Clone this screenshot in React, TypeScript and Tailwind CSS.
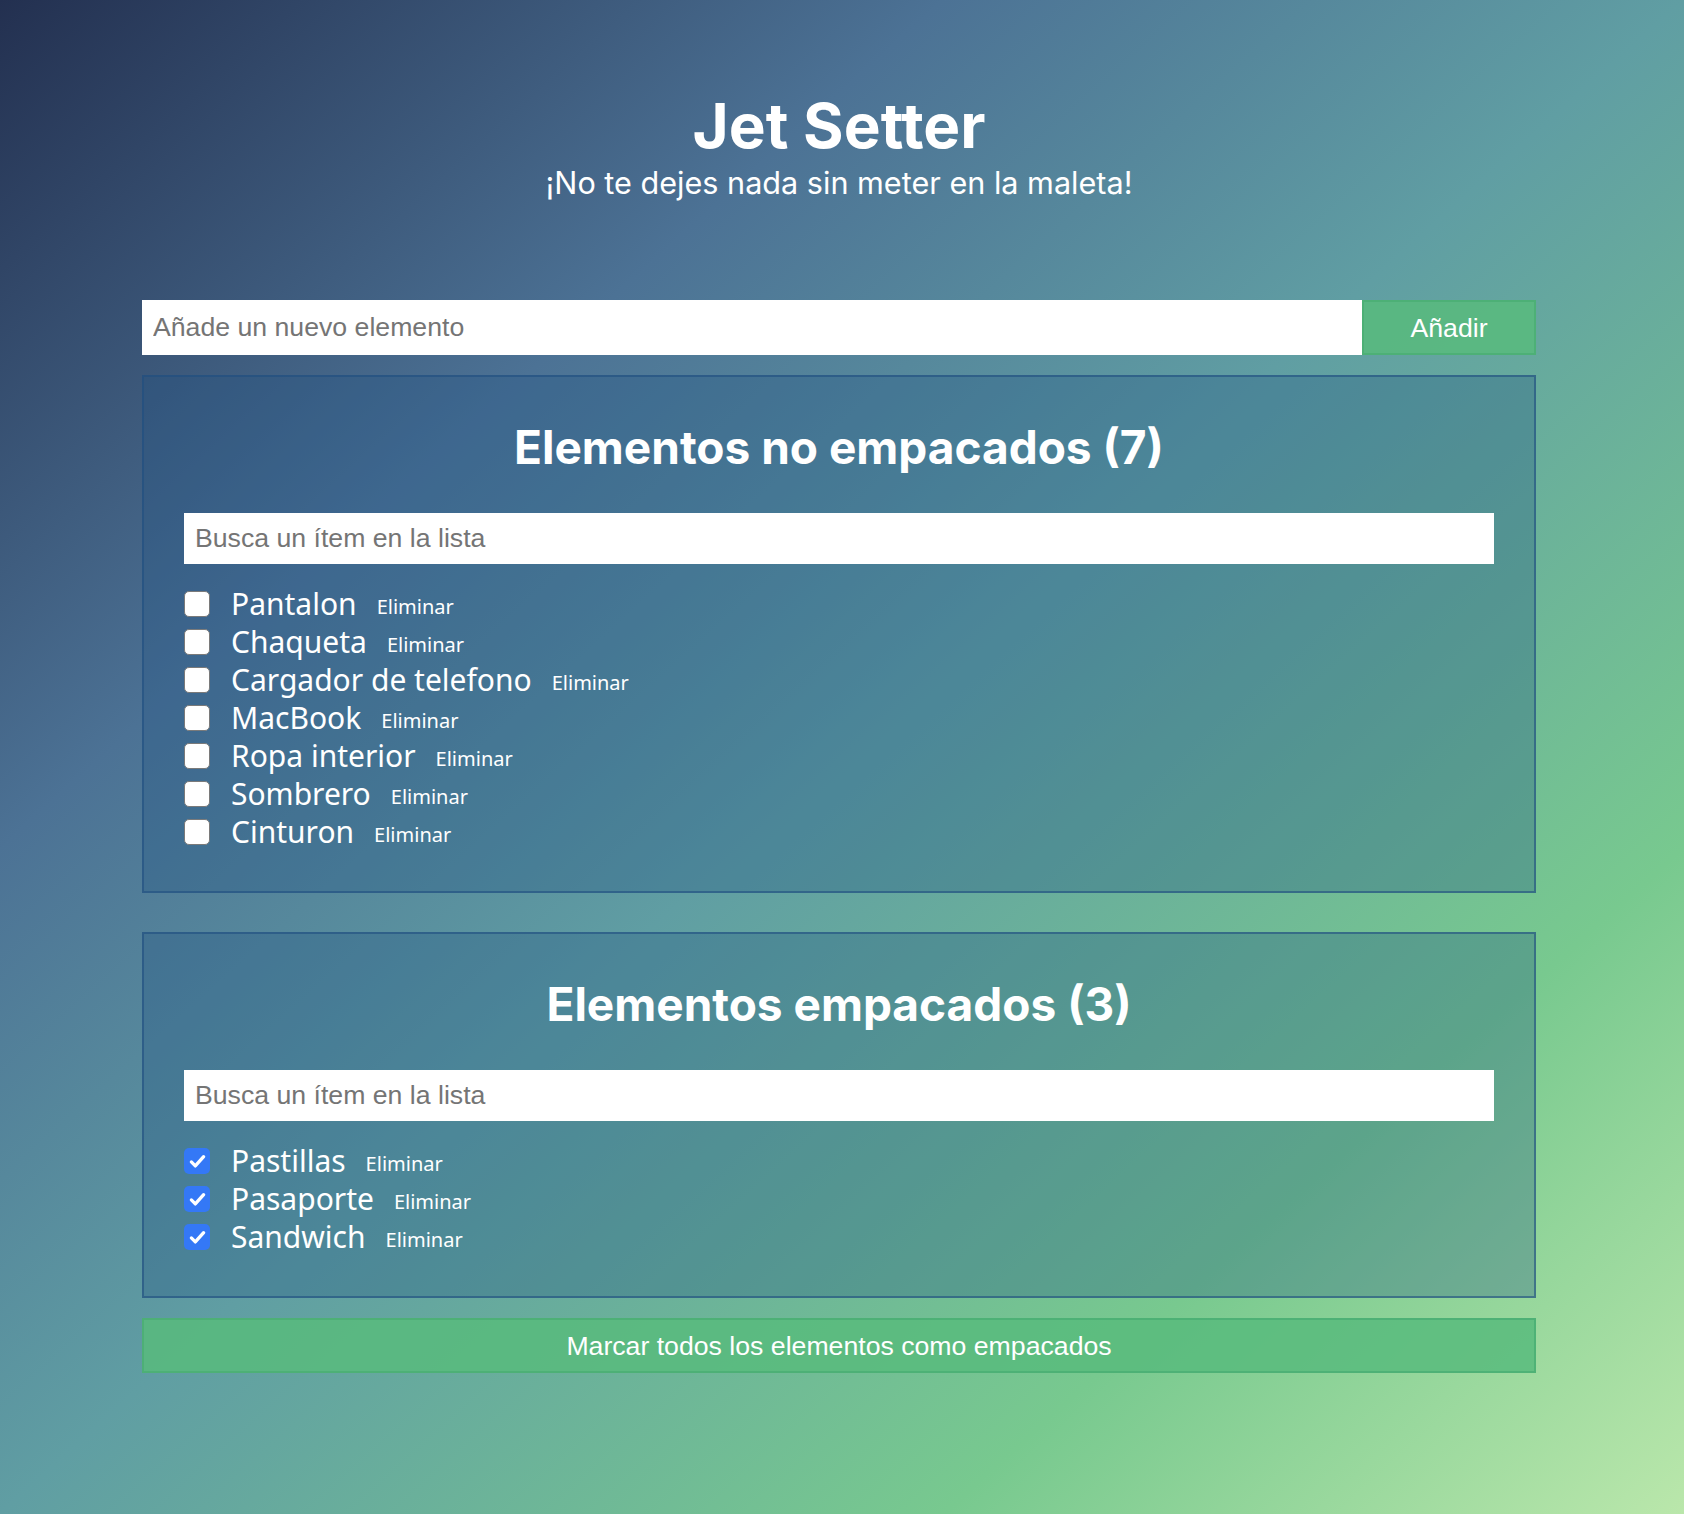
import { useState } from 'react';

type Item = {
  id: number;
  name: string;
  packed: boolean;
};

const initialItems: Item[] = [
  { id: 1, name: 'Pantalon', packed: false },
  { id: 2, name: 'Chaqueta', packed: false },
  { id: 3, name: 'Cargador de telefono', packed: false },
  { id: 4, name: 'MacBook', packed: false },
  { id: 5, name: 'Ropa interior', packed: false },
  { id: 6, name: 'Sombrero', packed: false },
  { id: 7, name: 'Cinturon', packed: false },
  { id: 8, name: 'Pastillas', packed: true },
  { id: 9, name: 'Pasaporte', packed: true },
  { id: 10, name: 'Sandwich', packed: true },
];

function CheckBox({ checked, onChange }: { checked: boolean; onChange: () => void }) {
  return (
    <button
      type="button"
      role="checkbox"
      aria-checked={checked}
      onClick={onChange}
      className={
        checked
          ? 'flex h-[26px] w-[26px] shrink-0 items-center justify-center rounded-[5px] bg-[#3478f6]'
          : 'h-[26px] w-[26px] shrink-0 rounded-[5px] border-[1.5px] border-[#7a7a7a] bg-white'
      }
    >
      {checked && (
        <svg viewBox="0 0 24 24" className="h-[21px] w-[21px]" fill="none">
          <path d="M5 12.5l4.5 4.5L19 6.5" stroke="white" strokeWidth="3.8" strokeLinecap="round" strokeLinejoin="round" />
        </svg>
      )}
    </button>
  );
}

function ItemList({
  title,
  items,
  onToggle,
  onRemove,
}: {
  title: string;
  items: Item[];
  onToggle: (id: number) => void;
  onRemove: (id: number) => void;
}) {
  const [filter, setFilter] = useState('');
  const shown = items.filter(item => item.name.toLowerCase().includes(filter.toLowerCase()));

  return (
    <section className="border-2 border-[#1f4e80]/60 bg-[#1f4e80]/30 p-10">
      <h2 className="text-center text-[46px] font-bold leading-[60px]">
        {title} ({items.length})
      </h2>
      <input
        value={filter}
        onChange={e => setFilter(e.target.value)}
        placeholder="Busca un ítem en la lista"
        className="mt-[36px] block h-[51px] w-full bg-white px-[11px] font-['Liberation_Sans',Arial,sans-serif] text-[26.67px] text-gray-800 outline-none placeholder:text-[#757575]"
      />
      <ul className="mt-[21px]">
        {shown.map(item => (
          <li key={item.id} className="flex h-[38px] items-center">
            <CheckBox checked={item.packed} onChange={() => onToggle(item.id)} />
            <span className="ml-[21px] font-['Noto_Sans',sans-serif] text-[30px] leading-none">{item.name}</span>
            <button
              type="button"
              onClick={() => onRemove(item.id)}
              className="ml-[20px] mt-[6px] font-['Noto_Sans',sans-serif] text-[20px] leading-none"
            >
              Eliminar
            </button>
          </li>
        ))}
      </ul>
    </section>
  );
}

export default function App() {
  const [items, setItems] = useState<Item[]>(initialItems);
  const [newName, setNewName] = useState('');

  const unpacked = items.filter(item => !item.packed);
  const packed = items.filter(item => item.packed);

  const toggle = (id: number) =>
    setItems(prev => prev.map(item => (item.id === id ? { ...item, packed: !item.packed } : item)));
  const remove = (id: number) => setItems(prev => prev.filter(item => item.id !== id));

  function addItem(e: React.FormEvent) {
    e.preventDefault();
    if (!newName.trim()) return;
    setItems(prev => [...prev, { id: Date.now(), name: newName.trim(), packed: false }]);
    setNewName('');
  }

  return (
    <div className="min-h-screen bg-[linear-gradient(to_bottom_right,#233050_0%,#4c7295_28%,#609ea3_50%,#78c98f_78%,#bae7ab_100%)] pb-20 pr-[6px] font-['Inter',sans-serif] text-white">
      <header className="pt-[95px] text-center">
        <h1 className="text-[62px] font-bold leading-none">Jet Setter</h1>
        <p className="mt-[11px] text-[30.6px] leading-[30px]">¡No te dejes nada sin meter en la maleta!</p>
      </header>

      <main className="mx-auto mt-[102px] w-[1394px]">
        <form onSubmit={addItem} className="flex h-[55px]">
          <input
            value={newName}
            onChange={e => setNewName(e.target.value)}
            placeholder="Añade un nuevo elemento"
            className="h-full flex-1 bg-white px-[11px] font-['Liberation_Sans',Arial,sans-serif] text-[26.67px] text-gray-800 outline-none placeholder:text-[#757575]"
          />
          <button
            type="submit"
            className="h-full w-[174px] border-2 border-[#4aae73]/80 bg-[#58bb7c]/85 font-['Liberation_Sans',Arial,sans-serif] text-[26.67px]"
          >
            Añadir
          </button>
        </form>

        <div className="mt-[20px]">
          <ItemList title="Elementos no empacados" items={unpacked} onToggle={toggle} onRemove={remove} />
        </div>
        <div className="mt-[39px]">
          <ItemList title="Elementos empacados" items={packed} onToggle={toggle} onRemove={remove} />
        </div>

        <button
          type="button"
          onClick={() => setItems(prev => prev.map(item => ({ ...item, packed: true })))}
          className="mt-[20px] block h-[55px] w-full border-2 border-[#4aae73]/80 bg-[#58bb7c]/85 font-['Liberation_Sans',Arial,sans-serif] text-[26.67px]"
        >
          Marcar todos los elementos como empacados
        </button>
      </main>
    </div>
  );
}
